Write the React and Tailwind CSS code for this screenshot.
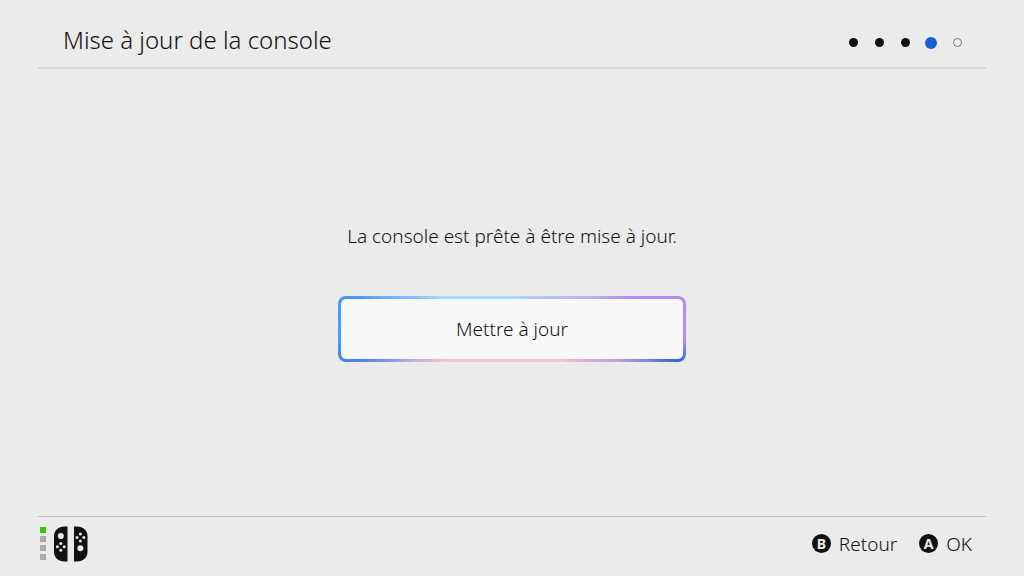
import clsx from 'clsx';

const steps = ['done', 'done', 'done', 'current', 'todo'];

const hints = [
  { key: 'B', label: 'Retour' },
  { key: 'A', label: 'OK' },
];

function StepDots() {
  return (
    <ol className="flex items-center gap-3.5 pt-1.5" aria-label="Étapes">
      {steps.map((step, index) => (
        <li key={index} className="flex w-3 h-3 items-center justify-center">
          <span
            className={clsx(
              'shrink-0 rounded-full',
              step === 'done' && 'w-[9px] h-[9px] bg-[#111111]',
              step === 'current' && 'w-3 h-3 bg-[#1460d8]',
              step === 'todo' && 'w-[9px] h-[9px] border border-[#777777]'
            )}
          />
        </li>
      ))}
    </ol>
  );
}

function JoyCons() {
  return (
    <svg className="w-[34px] h-9" viewBox="0 0 34 36" aria-hidden="true">
      <path d="M13.5 0.5V35.5H10.5C4.5 35.5 0 31.5 0 26V10C0 4.5 4.5 0.5 10.5 0.5Z" fill="#111111" />
      <path d="M20 0.5V35.5H23C29 35.5 33.5 31.5 33.5 26V10C33.5 4.5 29 0.5 23 0.5Z" fill="#111111" />
      <g fill="#ebebeb">
        <circle cx="6.8" cy="10" r="3" />
        <circle cx="6.8" cy="17.4" r="1.5" />
        <circle cx="3.4" cy="20.8" r="1.5" />
        <circle cx="10.2" cy="20.8" r="1.5" />
        <circle cx="6.8" cy="24.2" r="1.5" />
        <circle cx="26.4" cy="8.1" r="1.5" />
        <circle cx="23" cy="11.5" r="1.5" />
        <circle cx="29.8" cy="11.5" r="1.5" />
        <circle cx="26.4" cy="14.9" r="1.5" />
        <circle cx="26.4" cy="22.2" r="3" />
      </g>
    </svg>
  );
}

function Controller() {
  return (
    <div className="flex items-center gap-2">
      <div className="flex flex-col gap-[3px]">
        <span className="w-1.5 h-1.5 bg-[#2fcb00]" />
        <span className="w-1.5 h-1.5 bg-[#aaaaaa]" />
        <span className="w-1.5 h-1.5 bg-[#aaaaaa]" />
        <span className="w-1.5 h-1.5 bg-[#aaaaaa]" />
      </div>
      <JoyCons />
    </div>
  );
}

export default function App() {
  return (
    <div className="flex flex-col min-h-screen px-[38px] bg-[#ebebeb] text-[#111111] font-light font-['Noto_Sans',sans-serif]">
      <header className="flex items-center justify-between h-[69px] pl-[25px] pr-[23px] pt-3 border-b-2 border-[#d6d6d6]">
        <h1 className="text-2xl leading-8">Mise à jour de la console</h1>
        <StepDots />
      </header>

      <main className="flex flex-1 flex-col items-center justify-center gap-12 py-14">
        <p className="text-[19px] leading-6">La console est prête à être mise à jour.</p>
        <button
          type="button"
          className="w-full max-w-[348px] p-[3px] rounded-lg bg-[conic-gradient(from_0deg_at_50%_50%,#a5dcff_0deg,#bdb5f5_67deg,#b18df0_76deg,#b18df0_94deg,#3565e0_101deg,#7f84e2_103deg,#c3a0e0_107deg,#ffc2d0_123deg,#ffc2d0_244deg,#c9b0e4_252deg,#7c94f0_256deg,#4080f5_259deg,#559bff_270deg,#4a90f5_281deg,#6cb2fa_284deg,#a5dcff_294deg,#a5dcff_360deg)]"
        >
          <span className="block py-[18px] rounded-[5px] bg-[#f8f8f8] text-[19px] leading-6">Mettre à jour</span>
        </button>
      </main>

      <footer className="flex items-center justify-between h-[60px] pl-0.5 pr-3.5 pb-1.5 border-t border-[#bcbcbc]">
        <Controller />
        <ul className="flex items-center gap-[22px]">
          {hints.map((hint) => (
            <li key={hint.key} className="flex items-center gap-2">
              <span className="flex items-center justify-center w-[19px] h-[19px] rounded-full bg-[#111111] text-[#ebebeb] text-sm leading-4 font-bold">
                {hint.key}
              </span>
              <span className="text-[19px] leading-6">{hint.label}</span>
            </li>
          ))}
        </ul>
      </footer>
    </div>
  );
}
